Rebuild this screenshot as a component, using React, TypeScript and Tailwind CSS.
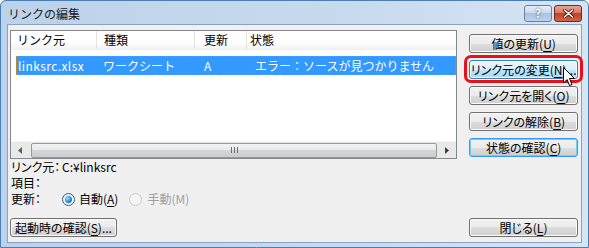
import React from "react";

const jp = "font-['Noto_Sans_CJK_JP','Noto_Sans',sans-serif]";
const palt = "[font-feature-settings:'palt']";

type Variant = "normal" | "hover" | "default";

function Btn({ children, variant = "normal", className = "" }: { children: React.ReactNode; variant?: Variant; className?: string }) {
  const skin =
    variant === "hover"
      ? "border-[#3c7fb1] bg-[linear-gradient(to_bottom,#eaf6fd_0%,#d9f0fc_50%,#bee6fd_50%,#a7d9f5_100%)] shadow-[inset_0_0_0_1px_#f4fbfe]"
      : variant === "default"
      ? "border-[#3399ff] bg-[linear-gradient(to_bottom,#f2f2f2_0%,#ebebeb_50%,#dddddd_50%,#cfcfcf_100%)] shadow-[inset_0_0_0_1px_#6fd0fb]"
      : "border-[#707070] bg-[linear-gradient(to_bottom,#f2f2f2_0%,#ebebeb_50%,#dddddd_50%,#cfcfcf_100%)] shadow-[inset_0_0_0_1px_#fbfbfb]";
  return (
    <div
      className={`h-[19px] flex items-center justify-center rounded-[3px] border text-[12px] leading-none text-black whitespace-nowrap ${palt} ${skin} ${className}`}
    >
      {children}
    </div>
  );
}

function U({ children }: { children: React.ReactNode }) {
  return <span className="underline underline-offset-2">{children}</span>;
}

function Radio({ checked, disabled }: { checked?: boolean; disabled?: boolean }) {
  return (
    <div
      className={`w-[13px] h-[13px] shrink-0 rounded-full border flex items-center justify-center ${
        disabled ? "border-[#c8c8c8] bg-[#f4f4f4]" : "border-[#2c628b] bg-[linear-gradient(135deg,#e6e6e6,#ffffff)]"
      }`}
    >
      {checked && (
        <div className="w-[7px] h-[7px] rounded-full bg-[radial-gradient(circle_at_35%_35%,#9fe3ff_0%,#1c8ee0_55%,#0a4f9c_100%)]" />
      )}
    </div>
  );
}

export default function App() {
  return (
    <div className={`w-[589px] h-[248px] relative overflow-hidden ${jp}`}>
      <div className="w-full h-full flex flex-col rounded-t-[6px] border border-[#4a7fb5] bg-[linear-gradient(to_right,#bcd2ea,#c8daee_60%,#d6e5f4)]">
        {/* title bar */}
        <div className="h-[23px] flex items-center justify-between pl-[7px] pr-[6px]">
          <span className="text-[12px] leading-none text-[#1a1a1a] mt-[2px]">リンクの編集</span>
          <div className="flex items-center gap-[2px] mt-[1px]">
            <div className="w-[28px] h-[17px] rounded-[3px] border border-[#6b7f99] bg-[linear-gradient(to_bottom,#e4eef9_0%,#c6d8ee_50%,#a9c2e2_50%,#bcd3ee_100%)] flex items-center justify-center text-[12px] font-bold leading-none text-white [text-shadow:0_0_2px_#334]">
              ?
            </div>
            <div className="w-[28px] h-[17px] rounded-[3px] border border-[#6d2a1f] bg-[linear-gradient(to_bottom,#e8a493_0%,#d7735d_50%,#c33e22_50%,#d1664a_100%)] flex items-center justify-center">
              <svg width="11" height="9" viewBox="0 0 11 9">
                <path d="M1.5 1 L9.5 8 M9.5 1 L1.5 8" stroke="#3a1510" strokeWidth="3" strokeLinecap="round" />
                <path d="M1.5 1 L9.5 8 M9.5 1 L1.5 8" stroke="#ffffff" strokeWidth="1.6" strokeLinecap="round" />
              </svg>
            </div>
          </div>
        </div>

        {/* client area */}
        <div className="flex-1 mx-[6px] mb-[4px] border border-[#8aa2c0] bg-[#f0f0f0] flex flex-col pl-[2px] pr-[3px] pt-[5px] text-[12px] text-black">
          <div className="flex">
            {/* list view */}
            <div className="w-[449px] h-[129px] border border-[#828790] bg-white flex flex-col overflow-hidden">
              <div className="h-[19px] shrink-0 flex items-center bg-[linear-gradient(to_bottom,#ffffff,#ffffff_60%,#f3f4f6)] border-b border-[#eceef1] leading-none whitespace-nowrap">
                <div className="w-[86px] h-full flex items-center pl-[6px] border-r border-[#e2e3e5]">リンク元</div>
                <div className="w-[98px] h-full flex items-center pl-[7px] border-r border-[#e2e3e5]">種類</div>
                <div className="w-[52px] h-full flex items-center pl-[9px] border-r border-[#e2e3e5]">更新</div>
                <div className="flex-1 h-full flex items-center pl-[3px]">状態</div>
              </div>
              <div className="mt-[6px] ml-[5px] h-[19px] shrink-0 flex items-center bg-[#3399ff] text-white leading-none whitespace-nowrap outline-1 outline-dotted outline-[#c08a3e] -outline-offset-1">
                <div className="w-[81px] pl-[2px] tracking-[0.4px]">linksrc.xlsx</div>
                <div className="w-[98px] pl-[6px]">ワークシート</div>
                <div className="w-[52px] pl-[9px]">A</div>
                <div className="flex-1 pl-[8px]">エラー：ソースが見つかりません</div>
              </div>
              <div className="flex-1" />
              {/* horizontal scrollbar */}
              <div className="h-[17px] shrink-0 flex items-center bg-[#e9e9e9] border-t border-[#f5f5f5]">
                <div className="w-[18px] h-full flex items-center justify-center">
                  <svg width="4" height="7" viewBox="0 0 4 7"><path d="M4 0 L0 3.5 L4 7 Z" fill="#606060" /></svg>
                </div>
                <div className="ml-[2px] w-[406px] h-[15px] rounded-[2px] border border-[#979797] bg-[linear-gradient(to_bottom,#f3f3f3_0%,#e8e8e8_50%,#d6d6d6_50%,#cdcdcd_100%)] flex items-center justify-center gap-[2px]">
                  <div className="w-[1px] h-[6px] bg-[#6b6b6b]" />
                  <div className="w-[1px] h-[6px] bg-[#6b6b6b]" />
                  <div className="w-[1px] h-[6px] bg-[#6b6b6b]" />
                </div>
                <div className="flex-1 h-full flex items-center justify-center">
                  <svg width="4" height="7" viewBox="0 0 4 7"><path d="M0 0 L4 3.5 L0 7 Z" fill="#404040" /></svg>
                </div>
              </div>
            </div>

            {/* right buttons */}
            <div className="ml-[12px] pt-[4px] w-[109px] flex flex-col gap-[7px]">
              <Btn>値の更新(<U>U</U>)</Btn>
              <div className="relative">
                <div className="absolute -inset-x-[5px] -top-[5px] -bottom-[4px] rounded-[7px] border-[3px] border-[#e8101a]" />
                <Btn variant="hover">リンク元の変更(<U>N</U>)...</Btn>
              </div>
              <Btn>リンク元を開く(<U>O</U>)</Btn>
              <Btn>リンクの解除(<U>B</U>)</Btn>
              <Btn variant="default">状態の確認(<U>C</U>)</Btn>
            </div>
          </div>

          {/* info */}
          <div className={`grid grid-cols-[51px_1fr] auto-rows-[16px] items-center leading-[16px] pl-[1px] whitespace-nowrap ${palt}`}>
            <span>リンク元：</span>
            <span>C:¥linksrc</span>
            <span>項目：</span>
            <span />
            <span>更新：</span>
            <div className="flex items-center">
              <Radio checked />
              <span className="ml-[4px]">
                自動(<U>A</U>)
              </span>
              <div className="ml-[11px]">
                <Radio disabled />
              </div>
              <span className="ml-[5px] text-[#a0a0a0]">手動(M)</span>
            </div>
          </div>

          <div className="mt-[11px] flex justify-between">
            <Btn className="w-[107px]">起動時の確認(<U>S</U>)...</Btn>
            <Btn className="w-[109px]">閉じる(<U>L</U>)</Btn>
          </div>
        </div>
      </div>

      {/* mouse cursor */}
      <svg className="absolute left-[563px] top-[67px]" width="13" height="20" viewBox="0 0 13 20">
        <path d="M0.5 0.5 L0.5 16 L4 12.5 L6.5 18.5 L9 17.5 L6.5 11.5 L11.5 11.5 Z" fill="#ffffff" stroke="#000000" strokeWidth="1" strokeLinejoin="miter" />
      </svg>
    </div>
  );
}
